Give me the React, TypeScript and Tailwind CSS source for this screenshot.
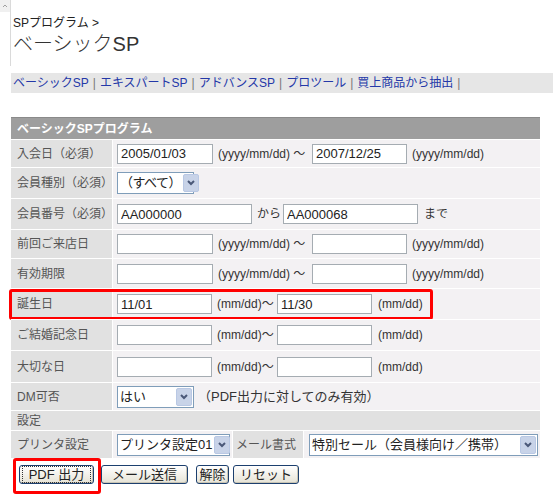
import type { ReactNode } from 'react';

const navLinks = ['ベーシックSP', 'エキスパートSP', 'アドバンスSP', 'プロツール', '買上商品から抽出'];

function TextBox({ value = '', className = '' }: { value?: string; className?: string }) {
  return (
    <input
      className={`h-[20px] shrink-0 border border-[#a5acb2] bg-white px-[3px] text-[13px] leading-[18px] text-[#222] outline-none ${className}`}
      readOnly
      type="text"
      value={value}
    />
  );
}

function Select({ value, className = '', textClass = '' }: { value: string; className?: string; textClass?: string }) {
  return (
    <div
      className={`flex h-[22px] shrink-0 items-center justify-between gap-[2px] border border-[#7f9db9] bg-white pl-[2px] ${className}`}
    >
      <span className={`whitespace-nowrap text-[13px] text-[#222] ${textClass}`}>{value}</span>
      <span className="mr-px grid h-[18px] w-[16px] shrink-0 place-items-center rounded-[2px] border border-[#b9c8e4] bg-[#c8d3e8]">
        <svg aria-hidden="true" className="h-[6px] w-[8px]" fill="none" viewBox="0 0 8 6">
          <path d="m1 1 3 3 3-3" stroke="#4a5878" strokeWidth="2" />
        </svg>
      </span>
    </div>
  );
}

function Row({
  label,
  children,
  height,
  extra,
}: {
  label: string;
  children: ReactNode;
  height: string;
  extra?: ReactNode;
}) {
  return (
    <div className={`relative flex border-t border-white ${height}`}>
      <div className="flex w-[101px] shrink-0 items-center bg-[#e1e1e1] pl-[6px] text-[12px] text-[#555]">{label}</div>
      <div className="ml-px flex flex-1 items-center bg-[#f3f1f3] pl-[4px] text-[12px] text-[#333]">{children}</div>
      {extra}
    </div>
  );
}

function XpButton({ label, className = '', focused = false }: { label: string; className?: string; focused?: boolean }) {
  return (
    <button
      className={`h-[19px] shrink-0 rounded-[3px] border border-[#1c3f6e] bg-gradient-to-b from-white to-[#e6e3d6] px-[2px] text-[13px] leading-none text-[#222] shadow-[inset_-1px_-1px_0_#c9c5b5] ${className}`}
      type="button"
    >
      <span className={`flex h-full items-center justify-center ${focused ? 'border border-dotted border-[#333]' : ''}`}>
        {label}
      </span>
    </button>
  );
}

function DateRange() {
  return (
    <>
      <TextBox className="w-[96px]" />
      <span className="ml-[5px] w-[94px] shrink-0 whitespace-nowrap">(yyyy/mm/dd) ～</span>
      <TextBox className="w-[95px]" />
      <span className="ml-[5px] whitespace-nowrap">(yyyy/mm/dd)</span>
    </>
  );
}

function DayRange({ from = '', to = '' }: { from?: string; to?: string }) {
  return (
    <>
      <TextBox className="w-[95px]" value={from} />
      <span className="ml-[5px] w-[60px] shrink-0 whitespace-nowrap">(mm/dd)～</span>
      <TextBox className="w-[95px]" value={to} />
      <span className="ml-[6px] whitespace-nowrap">(mm/dd)</span>
    </>
  );
}

export default function App() {
  return (
    <div className="h-[494px] w-[553px] overflow-hidden bg-white font-['Liberation_Sans','Noto_Sans_CJK_JP',sans-serif]">
      <div className="flex h-[66px]">
        <div className="w-[11px] shrink-0 border-r border-[#dadada]">
          <div className="grid h-[12px] w-[10px] place-items-center bg-[#f0f0f0]">
            <svg aria-hidden="true" className="h-[4px] w-[6px]" fill="none" viewBox="0 0 6 4">
              <path d="m1 3 2-2 2 2" stroke="#a0a0a0" strokeWidth="1" />
            </svg>
          </div>
        </div>
        <div className="pl-[2px] pt-[16px] text-[#222]">
          <p className="text-[12px] leading-[14px]">SPプログラム &gt;</p>
          <h1 className="mt-[2px] text-[20px] font-light leading-[24px] text-[#333]">ベーシックSP</h1>
        </div>
      </div>

      <nav className="ml-[11px] mt-[7px] flex h-[20px] items-center bg-[#e6e6e6] pl-[2px] text-[12px] text-[#2438a8]">
        {navLinks.map((item) => (
          <span className="whitespace-nowrap" key={item}>
            {item}
            <span className="mx-[4px] text-[#777]">|</span>
          </span>
        ))}
      </nav>

      <div className="ml-[11px] mt-[24px] w-[529px]">
        <div className="flex h-[22px] items-center border-t border-[#8a8a8a] bg-[#9e9e9e] pl-[6px] text-[12px] font-bold text-white">
          ベーシックSPプログラム
        </div>

        <Row height="h-[28px]" label="入会日（必須）">
          <TextBox className="w-[96px]" value="2005/01/03" />
          <span className="ml-[5px] w-[94px] shrink-0 whitespace-nowrap">(yyyy/mm/dd) ～</span>
          <TextBox className="w-[95px]" value="2007/12/25" />
          <span className="ml-[5px] whitespace-nowrap">(yyyy/mm/dd)</span>
        </Row>
        <Row height="h-[31px]" label="会員種別（必須）">
          <Select className="w-[77px]" textClass="text-[12px] tracking-[-0.5px]" value="（すべて）" />
        </Row>
        <Row height="h-[31px]" label="会員番号（必須）">
          <TextBox className="w-[135px]" value="AA000000" />
          <span className="ml-[5px] w-[26px] shrink-0">から</span>
          <TextBox className="w-[135px]" value="AA000068" />
          <span className="ml-[6px]">まで</span>
        </Row>
        <Row height="h-[29px]" label="前回ご来店日">
          <DateRange />
        </Row>
        <Row height="h-[30px]" label="有効期限">
          <DateRange />
        </Row>
        <Row
          extra={
            <div className="pointer-events-none absolute -left-[2px] top-0 h-[31px] w-[424px] rounded-[3px] border-[3px] border-[#ff0000]" />
          }
          height="h-[31px]"
          label="誕生日"
        >
          <DayRange from="11/01" to="11/30" />
        </Row>
        <Row height="h-[31px]" label="ご結婚記念日">
          <DayRange />
        </Row>
        <Row height="h-[32px]" label="大切な日">
          <DayRange />
        </Row>
        <Row height="h-[28px]" label="DM可否">
          <Select className="w-[77px]" value="はい" />
          <span className="ml-[4px] whitespace-nowrap text-[13px]">（PDF出力に対してのみ有効）</span>
        </Row>
        <div className="flex h-[20px] items-center border-t border-white bg-[#e1e1e1] pl-[6px] text-[12px] text-[#555]">
          設定
        </div>
        <div className="flex h-[28px] border-t border-white">
          <div className="flex w-[101px] shrink-0 items-center bg-[#e1e1e1] pl-[6px] text-[12px] text-[#555]">
            プリンタ設定
          </div>
          <div className="ml-px flex w-[119px] shrink-0 items-center bg-[#f3f1f3] pl-[4px]">
            <Select className="w-[113px]" textClass="text-[12px]" value="プリンタ設定01" />
          </div>
          <div className="ml-px flex w-[70px] shrink-0 items-center bg-[#e1e1e1] pl-[3px] text-[12px] text-[#555]">
            メール書式
          </div>
          <div className="ml-px flex flex-1 items-center bg-[#f3f1f3] pl-[5px]">
            <Select className="w-[229px]" value="特別セール（会員様向け／携帯）" />
          </div>
        </div>
        <div className="relative flex h-[32px] items-center border-t border-white pl-[8px]">
          <XpButton className="w-[75px]" focused label="PDF 出力" />
          <XpButton className="ml-[7px] w-[87px]" label="メール送信" />
          <XpButton className="ml-[8px] w-[33px]" label="解除" />
          <XpButton className="ml-[4px] w-[66px]" label="リセット" />
          <div className="pointer-events-none absolute left-[2px] -top-[1px] h-[36px] w-[88px] rounded-[3px] border-[3px] border-[#ff0000]" />
        </div>
      </div>
    </div>
  );
}
